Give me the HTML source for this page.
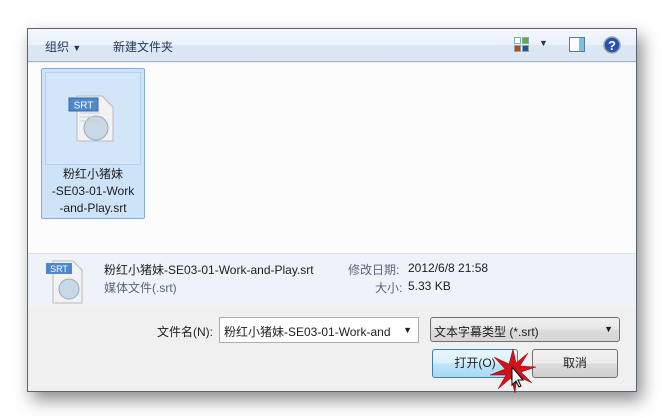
<!DOCTYPE html>
<html><head><meta charset="utf-8"><style>
*{margin:0;padding:0;box-sizing:border-box}
body{width:662px;height:418px;background:#fff;position:relative;overflow:hidden;font-family:"Liberation Sans","Noto Sans CJK SC",sans-serif;font-size:12px;color:#1e1e1e}
.dlg{position:absolute;left:27px;top:28px;width:610px;height:364px;background:#f0f0f0;border:1px solid #5a6470;box-shadow:5px 8px 16px rgba(0,0,0,.45)}
.tb{position:absolute;left:0;top:0;width:608px;height:33px;background:linear-gradient(#f4f8fd,#eaf1fa 50%,#dde7f4 51%,#dbe5f3);border-bottom:1px solid #a0b0c8}
.tb span{position:absolute;top:9px;font-size:12px;color:#1e395b}
.content{position:absolute;left:0;top:34px;width:608px;height:190px;background:#fcfcfc}
.sel{position:absolute;left:13px;top:5px;width:104px;height:151px;background:#cde3f8;border:1px solid #84acdd;border-radius:2px}
.sel .in{position:absolute;left:3px;top:3px;width:96px;height:93px;border:1px solid #b6d1ef;background:#d3e6f9}
.sel .t{position:absolute;left:0;top:97px;width:102px;text-align:center;line-height:17px;font-size:12px;color:#1e1e1e}
.det{position:absolute;left:0;top:224px;width:608px;height:54px;background:#eef3fa;border-top:1px solid #d6e0ee}
.det span{position:absolute;font-size:12px}
.inp{position:absolute;background:#fff;border:1px solid #abadb3}
.btn{position:absolute;border:1px solid #707070;border-radius:3px;background:linear-gradient(#f2f2f2,#ebebeb 50%,#dddddd 51%,#cfcfcf);text-align:center;line-height:26px}
</style></head><body>
<div class="dlg">
 <div class="tb">
  <span style="left:17px">组织 <span style="position:static;font-size:9px">▼</span></span>
  <span style="left:85px">新建文件夹</span>
  <svg style="position:absolute;left:486px;top:8px" width="16" height="16"><rect x=".5" y=".5" width="6" height="6" fill="#fff" stroke="#8aa"/><rect x="8.5" y=".5" width="6" height="6" fill="#6a4" stroke="#8aa"/><rect x=".5" y="8.5" width="6" height="6" fill="#c40" stroke="#8aa"/><rect x="8.5" y="8.5" width="6" height="6" fill="#259" stroke="#8aa"/></svg>
  <span style="left:511px;top:9px;font-size:9px;color:#1e395b">▼</span>
  <svg style="position:absolute;left:541px;top:8px" width="17" height="16"><rect x=".5" y=".5" width="15" height="14" fill="#fff" stroke="#5f7a95"/><rect x="10" y="1" width="5" height="13" fill="#7cc0e0"/></svg>
  <svg style="position:absolute;left:575px;top:7px" width="18" height="18"><circle cx="9" cy="9" r="8" fill="#2750b0" stroke="#9aa" stroke-width="1.5"/><text x="9" y="14" text-anchor="middle" font-size="13" font-weight="bold" fill="#fff" font-family="Liberation Sans">?</text></svg>
 </div>
 <div class="content">
  <div class="sel"><div class="in">
   <svg style="position:absolute;left:20px;top:20px" width="52" height="52"><path d="M11 3h25l11 11v34H11z" fill="#f2f2f2" stroke="#bbb"/><circle cx="30" cy="35" r="12" fill="#c9d8e6" stroke="#9ab"/><path d="M14 20h20M14 24h20M14 28h20" stroke="#ccd" /><rect x="3" y="5" width="29" height="13" fill="#4f87cc" stroke="#3a6aa8"/><text x="17.5" y="15.5" text-anchor="middle" font-size="10" fill="#fff" font-family="Liberation Sans">SRT</text></svg>
  </div>
  <div class="t">粉红小猪妹<br>-SE03-01-Work<br>-and-Play.srt</div></div>
 </div>
 <div class="det">
  <svg style="position:absolute;left:17px;top:5px" width="40" height="46"><path d="M8 2h20l9 9v33H8z" fill="#f2f2f2" stroke="#bbb"/><circle cx="24" cy="30" r="10" fill="#c9d8e6" stroke="#9ab"/><rect x="1" y="4" width="26" height="11" fill="#4f87cc"/><text x="14" y="13" text-anchor="middle" font-size="9" fill="#fff" font-family="Liberation Sans">SRT</text></svg>
  <span style="left:76px;top:7px">粉红小猪妹-SE03-01-Work-and-Play.srt</span>
  <span style="left:320px;top:7px;color:#5a6779">修改日期:</span>
  <span style="left:380px;top:7px">2012/6/8 21:58</span>
  <span style="left:76px;top:25px;color:#5a6779">媒体文件(.srt)</span>
  <span style="left:347px;top:25px;color:#5a6779">大小:</span>
  <span style="left:380px;top:25px">5.33 KB</span>
 </div>
 <span style="position:absolute;left:129px;top:294px">文件名(N):</span>
 <div class="inp" style="left:191px;top:288px;width:200px;height:26px;padding:5px 0 0 4px">粉红小猪妹-SE03-01-Work-and<span style="position:absolute;right:6px;top:7px;font-size:9px">▼</span></div>
 <div class="inp" style="left:402px;top:288px;width:190px;height:25px;border-color:#707070;border-radius:3px;background:linear-gradient(#f2f2f2,#e6e6e6 50%,#dcdcdc 51%,#d6d6d6);padding:5px 0 0 3px">文本字幕类型 (*.srt)<span style="position:absolute;right:6px;top:6px;font-size:9px">▼</span></div>
 <div class="btn" style="left:404px;top:320px;width:86px;height:29px;border-color:#3c7fb1;background:linear-gradient(#eaf6fd,#d9f0fc 50%,#bee6fd 51%,#a7d9f5)">打开(O)</div>
 <div class="btn" style="left:504px;top:320px;width:86px;height:29px">取消</div>
 <svg style="position:absolute;left:460px;top:318px" width="50" height="48"><polygon points="25,2 28,16 40,6 32,19 48,20 33,25 44,36 29,29 27,46 23,31 10,42 18,28 2,28 17,22 6,10 21,17" fill="#d0121a" stroke="#900" stroke-width=".5"/><path d="M24 20v18l4-4 3 6 2-1-3-6h5z" fill="#fff" stroke="#000"/></svg>
</div>
</body></html>
